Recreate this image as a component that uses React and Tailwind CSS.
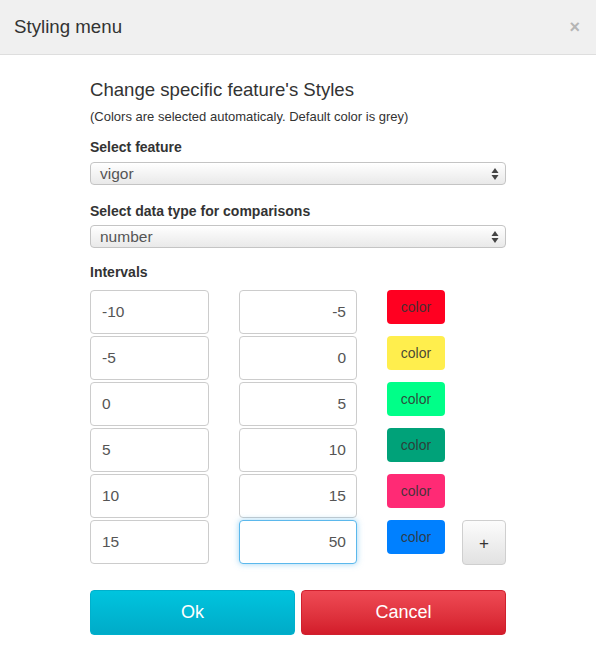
import React from "react";

const rows = [
  { a: "-10", b: "-5", c: "bg-[#ff0021]" },
  { a: "-5", b: "0", c: "bg-[#ffee4d]" },
  { a: "0", b: "5", c: "bg-[#00ff88]" },
  { a: "5", b: "10", c: "bg-[#00a279]" },
  { a: "10", b: "15", c: "bg-[#ff2a75]" },
  { a: "15", b: "50", c: "bg-[#0080ff]", last: true },
];

function SelectBox({ value }) {
  return (
    <div className="relative flex h-[23px] w-full items-center rounded-[4px] border border-[#c4c4c4] bg-gradient-to-b from-[#ffffff] to-[#e9e9e9] pl-[9px] text-[15.5px] text-[#555] shadow-[inset_0_1px_0_#fff]">
      <span>{value}</span>
      <svg className="absolute right-[6px] top-[4px]" width="8" height="14" viewBox="0 0 8 14">
        <path d="M4 1 L7.5 6 L0.5 6 Z" fill="#444" />
        <path d="M4 13 L7.5 8 L0.5 8 Z" fill="#444" />
      </svg>
    </div>
  );
}

export default function App() {
  return (
    <div
      className="h-[657px] w-[596px] bg-white text-[#333]"
      style={{ fontFamily: '"Liberation Sans", Arial, sans-serif' }}
    >
      <div className="flex h-[55px] items-center justify-between border-b border-[#dedede] bg-[#f0f0f0] pl-[14px] pr-[16px]">
        <span className="text-[18.7px] text-[#333]">Styling menu</span>
        <span className="text-[18px] font-bold leading-none text-[#b5b5b5]">×</span>
      </div>
      <div className="px-[90px] pt-[24px]">
        <div className="text-[18.6px] leading-[22px] text-[#333]">Change specific feature's Styles</div>
        <div className="mt-[9px] text-[13px] leading-[14px] text-[#333]">(Colors are selected automaticaly. Default color is grey)</div>
        <div className="mt-[15px] text-[14px] font-bold leading-[16px]">Select feature</div>
        <div className="mt-[7px]">
          <SelectBox value="vigor" />
        </div>
        <div className="mt-[18px] text-[14px] font-bold leading-[16px]">Select data type for comparisons</div>
        <div className="mt-[6px]">
          <SelectBox value="number" />
        </div>
        <div className="mt-[16px] text-[14px] font-bold leading-[16px]">Intervals</div>
        <div className="mt-[10px] flex flex-col gap-[2px]">
          {rows.map((r, i) => (
            <div key={i} className="flex items-start">
              <div className="flex h-[44px] w-[119px] items-center rounded-[4px] border border-[#cccccc] bg-white pl-[11px] text-[15.5px] text-[#555]">
                {r.a}
              </div>
              <div
                className={
                  r.last
                    ? "ml-[30px] flex h-[44px] w-[118px] items-center justify-end rounded-[4px] border border-[#5bb8ec] bg-white pr-[10px] text-[15.5px] text-[#555] shadow-[0_0_6px_rgba(91,184,236,0.6)]"
                    : "ml-[30px] flex h-[44px] w-[118px] items-center justify-end rounded-[4px] border border-[#cccccc] bg-white pr-[10px] text-[15.5px] text-[#555]"
                }
              >
                {r.b}
              </div>
              <div
                className={
                  "ml-[30px] flex h-[34px] w-[58px] items-center justify-center rounded-[4px] text-[14px] text-[#333]/90 " +
                  r.c
                }
              >
                color
              </div>
              {r.last && (
                <div className="ml-[17px] flex h-[45px] w-[44px] items-center justify-center rounded-[4px] border border-[#cfcfcf] bg-gradient-to-b from-[#fcfcfc] to-[#e2e2e2] pt-[3px] text-[17px] text-[#333]">
                  +
                </div>
              )}
            </div>
          ))}
        </div>
        <div className="mt-[25px] flex gap-[6px]">
          <div className="flex h-[45px] w-[205px] items-center justify-center rounded-[4px] border border-[#00b0cc] bg-gradient-to-b from-[#00c4de] to-[#00abc8] text-[18px] text-white">
            Ok
          </div>
          <div className="flex h-[45px] w-[205px] items-center justify-center rounded-[4px] border border-[#d0202e] bg-gradient-to-b from-[#ef4a55] to-[#d31b2a] text-[18px] text-white">
            Cancel
          </div>
        </div>
      </div>
    </div>
  );
}
